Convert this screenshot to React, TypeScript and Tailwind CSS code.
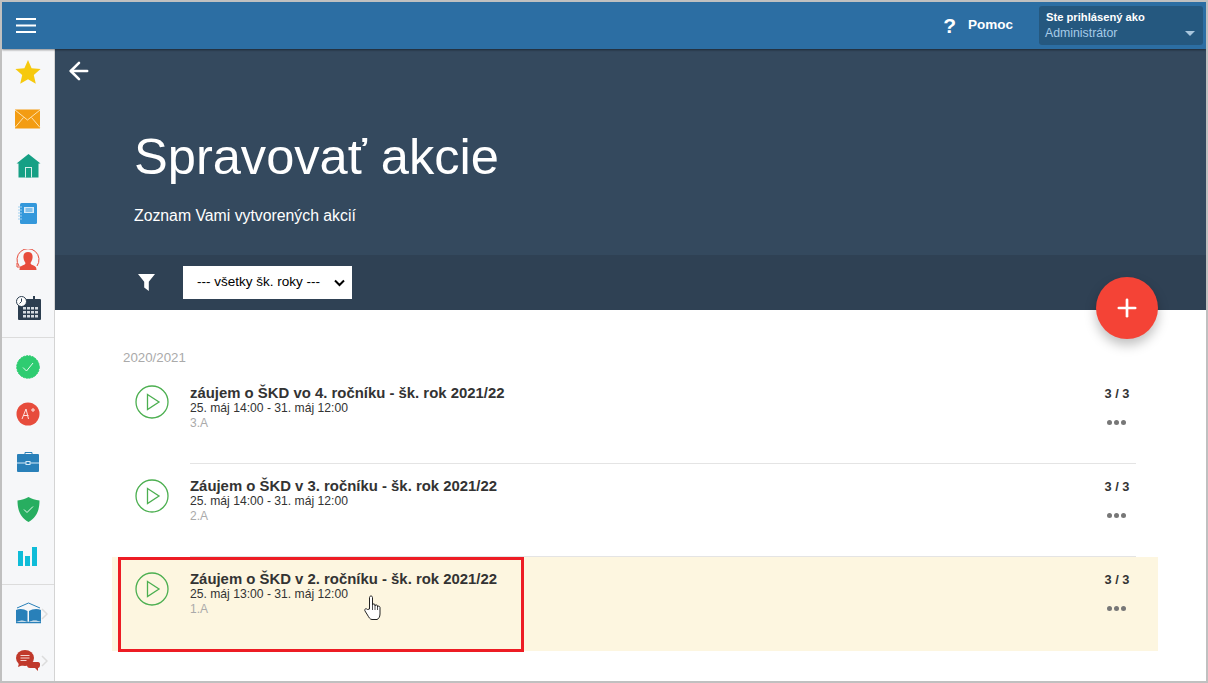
import React from "react";
import { ArrowLeft, Plus } from "lucide-react";

const Star = () => (
  <svg width="26" height="24" viewBox="0 0 26 24"><path d="M13 0l3.600 8.200 9 .8-6.800 6 2 8.800L13 19.200 5.200 23.800l2-8.800L.4 9l9-.8z" fill="#f6c90e" /></svg>
);
const Mail = () => (
  <svg width="26" height="20" viewBox="0 0 26 20"><rect width="25" height="19" y=".5" fill="#f39c12" /><path d="M0 1l12.500 10L25 1M0 18.500l8.500-10M25 18.500l-8.500-10" stroke="#fde3b0" strokeWidth="1" fill="none" /></svg>
);
const Home = () => (
  <svg width="25" height="24" viewBox="0 0 25 24"><path d="M12.500 0l12 9.500h-2V23.500h-20V9.500H.5z" fill="#16a085" /><rect x="9" y="13" width="7" height="10.500" fill="#d7f0ea" /><rect x="10" y="14" width="5" height="9.500" fill="#16a085" /></svg>
);
const Notebook = () => (
  <svg width="20" height="22" viewBox="0 0 20 22"><rect x="2" width="17" height="21" rx="1.500" fill="#3498db" /><rect x="6" y="4" width="10" height="6" fill="#d6eaf8" /><path d="M7.500 6h7M7.500 8h7" stroke="#3498db" /><path d="M0 4h4M0 7h4M0 10h4M0 13h4M0 16h4" stroke="#9fd0f0" /></svg>
);
const Person = () => (
  <svg width="24" height="24" viewBox="0 0 24 24"><path d="M3 17A11 11 0 1 1 21 17" fill="none" stroke="#e74c3c" strokeWidth="1" /><path d="M12 3c3.500 0 5 2.500 4.500 6-.3 2.500-1.500 4-2 5 0 1.500 2 2 4 3 1.500.7 2 2 2 4H3.500c0-2 .5-3.300 2-4 2-1 4-1.500 4-3-.5-1-1.700-2.500-2-5C7 5.500 8.500 3 12 3z" fill="#e74c3c" /><path d="M1 14v4h4" fill="none" stroke="#e74c3c" /></svg>
);
const Calendar = () => (
  <svg width="25" height="25" viewBox="0 0 25 25"><rect x="2" y="3" width="23" height="21" rx="1" fill="#2c3e50" /><rect x="17" y="0" width="2" height="5" fill="#2c3e50" /><g fill="#d5dbe1"><rect x="7" y="11" width="3" height="2.500" /><rect x="11" y="11" width="3" height="2.500" /><rect x="15" y="11" width="3" height="2.500" /><rect x="19" y="11" width="3" height="2.500" /><rect x="7" y="15" width="3" height="2.500" /><rect x="11" y="15" width="3" height="2.500" /><rect x="15" y="15" width="3" height="2.500" /><rect x="19" y="15" width="3" height="2.500" /><rect x="7" y="19" width="3" height="2.500" /><rect x="11" y="19" width="3" height="2.500" /><rect x="15" y="19" width="3" height="2.500" /><rect x="19" y="19" width="3" height="2.500" /></g><circle cx="5.500" cy="5.500" r="5" fill="#fff" stroke="#2c3e50" /><path d="M5.500 2.500v3l-2 2" stroke="#2c3e50" fill="none" /></svg>
);
const GreenBadge = () => (
  <svg width="24" height="24" viewBox="0 0 24 24"><circle cx="12" cy="12" r="11.300" fill="#2ecc71" strokeDasharray="2 1" stroke="#2ecc71" /><path d="M7 12.500l3.500 3.500L17 8" stroke="#e8fbf0" fill="none" /></svg>
);
const Grade = () => (
  <svg width="24" height="24" viewBox="0 0 24 24"><circle cx="12" cy="12" r="11.500" fill="#e74c3c" /><path d="M6 17l4-10 2.500 10M7.500 13.500h5M15 8h4M17 6v4" stroke="#fde4e1" fill="none" /></svg>
);
const Case = () => (
  <svg width="23" height="21" viewBox="0 0 23 21"><path d="M8 4V1.500h7V4" fill="none" stroke="#2980b9" /><rect y="3" width="22" height="18" rx="1" fill="#2980b9" /><path d="M0 12h22" stroke="#d6eaf8" /><rect x="9" y="10.500" width="4" height="3" fill="#2980b9" stroke="#d6eaf8" /></svg>
);
const Shield = () => (
  <svg width="23" height="25" viewBox="0 0 23 25"><path d="M11.500 0c3 2 7 3 11 3.500 0 10-3 17-11 21.500C3.500 20.500.500 13.500.500 3.500 4.500 3 8.500 2 11.500 0z" fill="#27ae60" /><path d="M7 12.500l3 3 6-6" stroke="#e8fbf0" fill="none" /></svg>
);
const Bars = () => (
  <svg width="20" height="20" viewBox="0 0 20 20" fill="#0fbcd8"><rect y="4" width="5" height="15" /><rect x="7" y="9" width="5" height="10" /><rect x="14" width="5" height="19" /></svg>
);
const Book = () => (
  <svg width="25" height="23" viewBox="0 0 25 23"><path d="M1 6l11.500-5L24 6" fill="none" stroke="#2980b9" /><path d="M0 8c4-2 8-1 11.500 1v11C8 18 4 18 0 20zM25 8c-4-2-9-1-12 1v11c3-2 8-2 12 0z" fill="#2980b9" /><path d="M0 20.500h25" stroke="#2980b9" strokeWidth="1.500" /></svg>
);
const Chat = () => (
  <svg width="24" height="22" viewBox="0 0 24 22"><path d="M15 12h7c1.500 0 2 1 2 2v1c0 2-1 3-2 3v3l-3-3h-5c-2 0-3-1-3-3s2-3 4-3z" fill="#c0392b" /><ellipse cx="9" cy="8" rx="9" ry="8" fill="#c0392b" /><path d="M3 13l-1 4 5-2z" fill="#c0392b" /><path d="M4.500 5.500h9M4.500 8h9M4.500 10.500h6" stroke="#f6d5d1" /></svg>
);

const Chevron = () => (
  <svg width="7" height="12" viewBox="0 0 7 12" className="absolute left-[39px] top-1/2 -translate-y-1/2"><path d="M1 1l5 5-5 5" fill="none" stroke="#dcdcdc" strokeWidth="1.500" /></svg>
);

const SideItem = ({ children, chevron }: { children: React.ReactNode; chevron?: boolean }) => (
  <div className="relative flex h-[47.400px] items-center justify-center">
    {children}
    {chevron && <Chevron />}
  </div>
);

const Play = () => (
  <svg width="34" height="34" viewBox="0 0 34 34" className="shrink-0">
    <circle cx="17" cy="17" r="16" fill="none" stroke="#4caf50" strokeWidth="1.300" />
    <path d="M12.500 9.500L24 17l-11.500 7.500z" fill="none" stroke="#4caf50" strokeWidth="1.300" />
  </svg>
);

const rows = [
  { title: "záujem o ŠKD vo 4. ročníku - šk. rok 2021/22", date: "25. máj 14:00 - 31. máj 12:00", cls: "3.A" },
  { title: "Záujem o ŠKD v 3. ročníku - šk. rok 2021/22", date: "25. máj 14:00 - 31. máj 12:00", cls: "2.A" },
  { title: "Záujem o ŠKD v 2. ročníku - šk. rok 2021/22", date: "25. máj 13:00 - 31. máj 12:00", cls: "1.A" },
];

const Row = ({ r, active, last, first }: { r: (typeof rows)[number]; active?: boolean; last?: boolean; first?: boolean }) => (
  <div className={`flex h-[93.500px] pl-[23px] pr-[22px] ${active ? "bg-[#fdf6e0]" : ""}`}>
    <div className="mt-[15px] w-[55px]">
      <Play />
    </div>
    <div className={`flex flex-1 justify-between pr-[6px] ${first ? "pt-[15px]" : "pt-[14px]"} ${last ? "" : "border-b border-[#e4e4e4]"}`}>
      <div>
        <div className="text-[14.900px] font-bold leading-[17px] text-[#333]">{r.title}</div>
        <div className="text-[12.150px] leading-[13px] text-[#333]">{r.date}</div>
        <div className="mt-[1px] text-[12px] leading-[14px] text-[#aaa]">{r.cls}</div>
      </div>
      <div className="flex w-[26px] flex-col items-center">
        <div className="whitespace-nowrap text-[12.800px] font-bold leading-[17px] text-[#333]">3 / 3</div>
        <div className="-ml-[2px] mt-[18px] flex gap-[2px]">
          <span className="h-[5px] w-[5px] rounded-full bg-[#777]" />
          <span className="h-[5px] w-[5px] rounded-full bg-[#777]" />
          <span className="h-[5px] w-[5px] rounded-full bg-[#777]" />
        </div>
      </div>
    </div>
  </div>
);

export default function App() {
  return (
    <div className="relative h-[683px] w-[1208px] overflow-hidden border-2 border-[#c0c0c0] bg-white font-['Liberation_Sans',Arial,sans-serif]">
      <header className="relative z-10 flex h-[47px] items-center justify-between bg-[#2c6ea3] pl-[14px] pr-[3px] shadow-[0_1px_2px_rgba(0,0,0,0.45)]">
        <svg width="20" height="15" viewBox="0 0 20 15" fill="#fff"><rect width="20" height="2" /><rect y="6.500" width="20" height="2" /><rect y="13" width="20" height="2" /></svg>
        <div className="flex items-center">
          <span className="text-[21px] font-bold leading-none text-white">?</span>
          <span className="ml-[12px] -mt-[1px] text-[13.500px] font-bold text-white">Pomoc</span>
          <div className="relative ml-[26px] h-[39px] w-[164px] rounded-[3px] bg-[#25587f] px-[7px] pt-[4px]">
            <div className="text-[11.200px] font-bold leading-[15px] text-white">Ste prihlásený ako</div>
            <div className="-ml-[1px] text-[12.300px] leading-[16px] text-[#a6cbe8]">Administrátor</div>
            <span className="absolute right-[8px] top-[25px] h-0 w-0 border-x-[5px] border-t-[5px] border-x-transparent border-t-[#a9c6dd]" />
          </div>
        </div>
      </header>
      <div className="flex h-[632px]">
        <aside className="w-[53px] shrink-0 overflow-hidden border-r border-[#d4d4d4] bg-[#f6f7f9]">
          <div className="-mt-[1px]">
            <SideItem><Star /></SideItem>
            <SideItem><Mail /></SideItem>
            <SideItem><Home /></SideItem>
            <SideItem><Notebook /></SideItem>
            <SideItem><Person /></SideItem>
            <SideItem><Calendar /></SideItem>
            <div className="h-[6px] border-b border-[#dcdcdc]" />
            <div className="h-[5px]" />
            <SideItem><GreenBadge /></SideItem>
            <SideItem><Grade /></SideItem>
            <SideItem><Case /></SideItem>
            <SideItem><Shield /></SideItem>
            <SideItem><Bars /></SideItem>
            <div className="h-[5px] border-b border-[#dcdcdc]" />
            <div className="h-[5px]" />
            <SideItem chevron><Book /></SideItem>
            <SideItem chevron><Chat /></SideItem>
          </div>
        </aside>
        <main className="relative flex-1">
          <section className="h-[206px] bg-[#34495e] pl-[10px] pt-[8px] text-white">
            <ArrowLeft size={28} color="#fff" strokeWidth={2.200} />
            <h1 className="ml-[69px] mt-[40px] text-[50.600px] font-normal leading-[64px]">Spravovať akcie</h1>
            <p className="ml-[69px] mt-[17px] text-[15.800px] leading-[20px]">Zoznam Vami vytvorených akcií</p>
          </section>
          <section className="flex h-[55px] items-center bg-[#2f4154] pl-[83px]">
            <svg width="17" height="17" viewBox="0 0 17 17" fill="#fff"><path d="M0 0h17l-6.200 7.800V17L6.200 13.500V7.800z" /></svg>
            <div className="ml-[28px] flex h-[33px] w-[169px] items-center justify-between bg-white pl-[14px] pr-[7px] text-[13.500px] text-black">
              <span>--- všetky šk. roky ---</span>
              <svg width="11" height="8" viewBox="0 0 11 8"><path d="M1 1.500l4.500 4.500L10 1.500" fill="none" stroke="#000" strokeWidth="2" /></svg>
            </div>
          </section>
          <div className="pl-[57px] pt-[39px]">
            <div className="pl-[11px] text-[13.300px] leading-[17px] text-[#aaa]">2020/2021</div>
            <div className="mt-[4px] w-[1046px]">
              <Row r={rows[0]} first />
              <Row r={rows[1]} />
              <Row r={rows[2]} active last />
            </div>
          </div>
          <button className="absolute left-[1041px] top-[228px] flex h-[62px] w-[62px] items-center justify-center rounded-full bg-[#f44336] shadow-[0_6px_12px_rgba(0,0,0,0.25)]">
            <Plus size={28} color="#fff" strokeWidth={2.300} />
          </button>
          <div className="pointer-events-none absolute left-[63px] top-[508px] h-[95px] w-[406px] border-[3px] border-[#ed1c24]" />
          <svg width="18" height="26" viewBox="0 0 18 26" className="absolute left-[309px] top-[546px]">
            <path d="M5.500 14V2.500c0-2 3-2 3 0V10c0-1.500 2.500-1.500 2.500 0v1c0-1.500 2.500-1.500 2.500 0v1c0-1.500 2.500-1 2.500.5V19c0 3-1.500 5-3 5.500H8c-2 0-3-2-4.500-4.500L1 16c-1-2 1-3 2.500-1.500z" fill="#fff" stroke="#222" strokeWidth="1" />
            <path d="M8.500 10v5M11 11v4M13.500 12v3" stroke="#222" strokeWidth=".8" />
          </svg>
        </main>
      </div>
    </div>
  );
}
